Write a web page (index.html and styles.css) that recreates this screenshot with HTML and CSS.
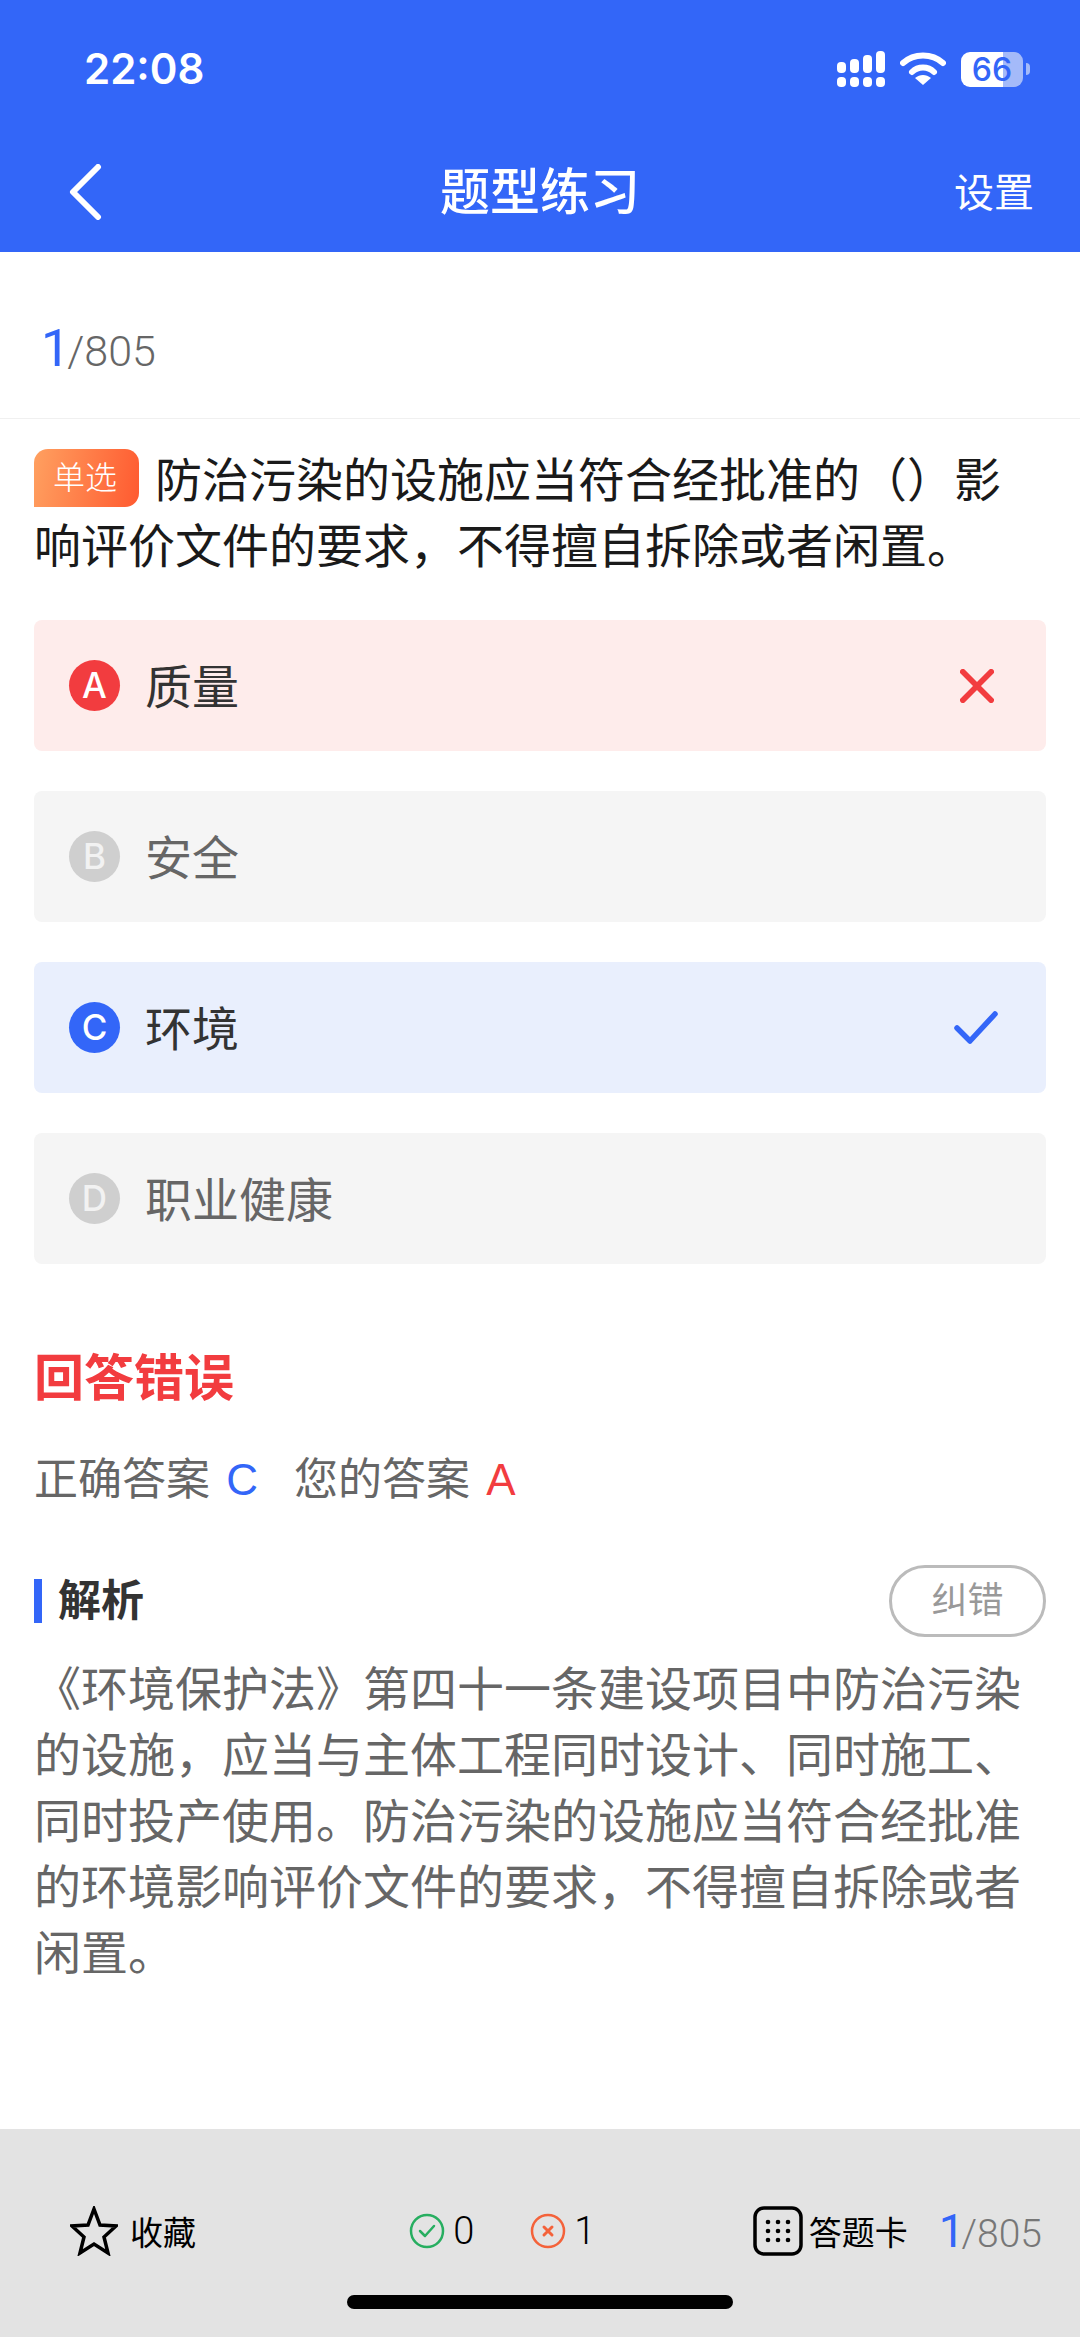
FILE: index.html
```html
<!DOCTYPE html>
<html lang="zh-CN">
<head>
    <meta charset="UTF-8" />
    <meta name="viewport" content="width=device-width, initial-scale=1" />
    <title>题型练习</title>
    <link rel="stylesheet" href="styles.css">
</head>
<body>

<div class="page">
    <header class="header">
        <div class="status">
            <span class="time">22:08</span>
            <div class="status-icons">
                <svg class="signal" width="48" height="36" viewBox="0 0 48 36">
                    <rect x="0" y="11" width="9" height="11" rx="4" fill="#fff"/>
                    <rect x="13" y="8" width="9" height="14" rx="4" fill="#fff"/>
                    <rect x="26" y="4" width="9" height="18" rx="4" fill="#fff"/>
                    <rect x="39" y="0" width="9" height="22" rx="4" fill="#fff"/>
                    <rect x="0" y="26" width="9" height="10" rx="4" fill="#fff"/>
                    <rect x="13" y="26" width="9" height="10" rx="4" fill="#fff"/>
                    <rect x="26" y="26" width="9" height="10" rx="4" fill="#fff"/>
                    <rect x="39" y="26" width="9" height="10" rx="4" fill="#fff"/>
                </svg>
                <svg class="wifi" width="46" height="34" viewBox="0 0 46 34">
                    <path d="M3 11 C14 1 32 1 43 11" fill="none" stroke="#fff" stroke-width="6" stroke-linecap="round"/>
                    <path d="M12 20 C18 14 28 14 34 20" fill="none" stroke="#fff" stroke-width="6" stroke-linecap="round"/>
                    <path d="M15 26 C20 22 26 22 31 26 L23 33 Z" fill="#fff"/>
                </svg>
                <div class="battery">
                    <div class="battery-body"><span class="battery-num">66</span></div>
                    <span class="battery-cap"></span>
                </div>
            </div>
        </div>
        <div class="nav">
            <svg class="back" width="34" height="56" viewBox="0 0 34 56">
                <path d="M30 3 L5 28 L30 53" fill="none" stroke="#fff" stroke-width="6" stroke-linecap="round" stroke-linejoin="round"/>
            </svg>
            <h1>题型练习</h1>
            <span class="setting">设置</span>
        </div>
    </header>

    <main class="content">
        <div class="counter"><span class="cur">1</span>/805</div>

        <p class="question"><span class="tag">单选</span>防治污染的设施应当符合经批准的（）影响评价文件的要求，不得擅自拆除或者闲置。</p>

        <div class="options">
            <div class="option wrong">
                <span class="letter">A</span>
                <span class="label">质量</span>
                <svg class="mark cross" width="34" height="34" viewBox="0 0 36 36">
                    <path d="M3 3 L33 33 M33 3 L3 33" fill="none" stroke="#f23c3f" stroke-width="6" stroke-linecap="round"/>
                </svg>
            </div>
            <div class="option">
                <span class="letter">B</span>
                <span class="label">安全</span>
            </div>
            <div class="option right">
                <span class="letter">C</span>
                <span class="label">环境</span>
                <svg class="mark" width="44" height="34" viewBox="0 0 44 34">
                    <path d="M3 17 L16 30 L41 3" fill="none" stroke="#3366f8" stroke-width="5.5" stroke-linecap="round" stroke-linejoin="round"/>
                </svg>
            </div>
            <div class="option">
                <span class="letter">D</span>
                <span class="label">职业健康</span>
            </div>
        </div>

        <div class="result">回答错误</div>
        <div class="answers">
            <span>正确答案 <b class="blue">C</b></span>
            <span>您的答案 <b class="red">A</b></span>
        </div>

        <div class="analysis-head">
            <span class="analysis-title">解析</span>
            <span class="report">纠错</span>
        </div>
        <p class="analysis">《环境保护法》第四十一条建设项目中防治污染的设施，应当与主体工程同时设计、同时施工、同时投产使用。防治污染的设施应当符合经批准的环境影响评价文件的要求，不得擅自拆除或者闲置。</p>
    </main>

    <footer class="bottom">
        <div class="bar">
            <div class="fav">
                <svg width="48" height="50" viewBox="0 0 48 50">
                    <path d="M24 3 L30 19 L46 20 L34 31 L38 47 L24 38 L10 47 L14 31 L2 20 L18 19 Z" fill="none" stroke="#000" stroke-width="3.5" stroke-linejoin="miter"/>
                </svg>
                <span>收藏</span>
            </div>
            <div class="scores">
                <div class="score">
                    <svg width="36" height="36" viewBox="0 0 36 36">
                        <circle cx="18" cy="18" r="16" fill="none" stroke="#27ae60" stroke-width="2.5"/>
                        <path d="M11 18 L16 23 L25 13" fill="none" stroke="#27ae60" stroke-width="2.5" stroke-linecap="round" stroke-linejoin="round"/>
                    </svg>
                    <span>0</span>
                </div>
                <div class="score">
                    <svg width="36" height="36" viewBox="0 0 36 36">
                        <circle cx="18" cy="18" r="16" fill="none" stroke="#f4623a" stroke-width="2.5"/>
                        <path d="M14 14 L22 22 M22 14 L14 22" fill="none" stroke="#f4623a" stroke-width="3" stroke-linecap="round"/>
                    </svg>
                    <span>1</span>
                </div>
            </div>
            <div class="card-link">
                <svg width="50" height="50" viewBox="0 0 50 50">
                    <rect x="2" y="2" width="46" height="46" rx="9" fill="none" stroke="#000" stroke-width="3.5"/>
                    <g fill="#000">
                        <circle cx="15" cy="16" r="2.3"/><circle cx="25" cy="16" r="2.3"/><circle cx="35" cy="16" r="2.3"/>
                        <circle cx="15" cy="25" r="2.3"/><circle cx="25" cy="25" r="2.3"/><circle cx="35" cy="25" r="2.3"/>
                        <circle cx="15" cy="34" r="2.3"/><circle cx="25" cy="34" r="2.3"/><circle cx="35" cy="34" r="2.3"/>
                    </g>
                </svg>
                <span class="card-text">答题卡</span>
                <span class="counter small"><span class="cur">1</span>/805</span>
            </div>
        </div>
        <div class="home-indicator"></div>
    </footer>
</div>

</body>
</html>
```

FILE: styles.css
```css
* {
    box-sizing: border-box;
}
body {
    margin: 0;
    background: #fff;
    font-family: "Liberation Sans", "Noto Sans CJK SC", sans-serif;
}
.page {
    width: 1080px;
    height: 2337px;
    display: flex;
    flex-direction: column;
    overflow: hidden;
}

/* header */
.header {
    height: 252px;
    background: #3366f8;
    color: #fff;
    flex-shrink: 0;
}
.status {
    height: 132px;
    padding: 39px 50px 0 84px;
    display: flex;
    justify-content: space-between;
    align-items: flex-start;
}
.time {
    font-family: Inter, sans-serif;
    font-size: 42px;
    font-weight: 600;
    line-height: 60px;
}
.status-icons {
    display: flex;
    align-items: center;
    gap: 15px;
    height: 44px;
    margin-top: 8px;
}
.battery {
    display: flex;
    align-items: center;
    gap: 3px;
}
.battery-body {
    width: 62px;
    height: 35px;
    border-radius: 9px;
    background: linear-gradient(90deg, #fff 0, #fff 68%, #a4baf9 68%, #a4baf9 100%);
    text-align: center;
}
.battery-num {
    font-family: Inter, sans-serif;
    font-size: 32px;
    font-weight: 500;
    line-height: 35px;
    color: #3366f8;
}
.battery-cap {
    width: 4px;
    height: 12px;
    background: #a4baf9;
    border-radius: 0 4px 4px 0;
}
.nav {
    height: 120px;
    position: relative;
    display: flex;
    align-items: center;
    justify-content: space-between;
    padding: 0 46px 0 68px;
}
.nav h1 {
    position: absolute;
    left: 0;
    right: 0;
    margin: 0;
    padding-bottom: 8px;
    text-align: center;
    font-size: 50px;
    font-weight: 500;
}
.setting {
    padding-bottom: 5px;
    font-size: 40px;
}

/* question */
.content {
    flex: 1;
    display: flex;
    flex-direction: column;
}
.counter {
    height: 167px;
    padding: 66px 0 0 41px;
    font-family: Roboto, "Liberation Sans", sans-serif;
    font-size: 43px;
    font-weight: 300;
    color: #666;
    border-bottom: 1px solid #f0f0f0;
}
.cur {
    font-size: 52px;
    font-weight: 400;
    letter-spacing: -3px;
    color: #3366f8;
}
.question {
    margin: 29px 34px 0;
    font-size: 47px;
    line-height: 66px;
    color: #1a1a1a;
}
.tag {
    display: inline-block;
    width: 105px;
    height: 58px;
    margin-top: -6px;
    margin-right: 16px;
    padding-right: 3px;
    border-radius: 14px 14px 14px 0;
    background: linear-gradient(100deg, #ffa060, #ff5a30);
    color: #fff;
    font-size: 32px;
    font-weight: 300;
    line-height: 58px;
    text-align: center;
    vertical-align: 8px;
}
.options {
    margin: 40px 34px 0;
    display: flex;
    flex-direction: column;
    gap: 40px;
}
.option {
    height: 131px;
    padding: 0 48px 0 35px;
    display: flex;
    align-items: center;
    background: #f5f5f5;
    border-radius: 8px;
    color: #666;
}
.letter {
    width: 51px;
    height: 51px;
    margin-right: 25px;
    border-radius: 50%;
    background: #cfcfcf;
    color: #f2f2f2;
    font-family: Inter, sans-serif;
    font-size: 35px;
    font-weight: 500;
    line-height: 51px;
    text-align: center;
}
.label {
    flex: 1;
    padding-bottom: 4px;
    font-size: 47px;
}
.mark.cross {
    margin-right: 4px;
}
.option.wrong {
    background: #feeceb;
    color: #333;
}
.option.wrong .letter {
    background: #f23c3f;
    color: #fff;
}
.option.right {
    background: #e9effd;
    color: #333;
}
.option.right .letter {
    background: #3366f8;
    color: #fff;
}

/* answer */
.result {
    margin: 74px 34px 0;
    font-size: 50px;
    font-weight: 700;
    color: #f23c3f;
}
.answers {
    margin: 34px 34px 0;
    display: flex;
    gap: 36px;
    font-size: 44px;
    color: #666;
}
.answers b {
    margin-left: 4px;
    font-weight: 400;
}
.blue {
    color: #3366f8;
}
.red {
    color: #f23c3f;
}
.analysis-head {
    margin: 57px 34px 0;
    display: flex;
    justify-content: space-between;
    align-items: center;
}
.analysis-title {
    padding-left: 16px;
    border-left: 8px solid #3366f8;
    font-size: 43px;
    font-weight: 700;
    line-height: 44px;
    color: #333;
}
.report {
    width: 157px;
    height: 72px;
    border: 3px solid #bbb;
    border-radius: 36px;
    color: #999;
    font-size: 36px;
    line-height: 66px;
    text-align: center;
}
.analysis {
    margin: 20px 34px 0;
    font-size: 47px;
    line-height: 66px;
    color: #666;
}

/* bottom */
.bottom {
    height: 208px;
    background: #e3e3e3;
    flex-shrink: 0;
    display: flex;
    flex-direction: column;
    align-items: center;
}
.bar {
    width: 100%;
    margin-top: 75px;
    height: 54px;
    padding: 0 38px 0 70px;
    display: flex;
    align-items: center;
    justify-content: space-between;
    color: #000;
}
.fav {
    display: flex;
    align-items: center;
    gap: 12px;
    font-size: 33px;
}
.scores {
    display: flex;
    gap: 56px;
    margin-left: 56px;
}
.score {
    display: flex;
    align-items: center;
    gap: 8px;
    font-family: Roboto, "Liberation Sans", sans-serif;
    font-size: 38px;
    font-weight: 300;
}
.card-link {
    display: flex;
    align-items: center;
    gap: 6px;
}
.card-text {
    font-size: 33px;
    margin-right: 25px;
}
.counter.small {
    height: auto;
    padding: 0;
    border: none;
    font-size: 39px;
    color: #777;
}
.counter.small .cur {
    font-size: 46px;
}
.home-indicator {
    width: 386px;
    height: 14px;
    margin-top: 37px;
    background: #000;
    border-radius: 7px;
}
```
